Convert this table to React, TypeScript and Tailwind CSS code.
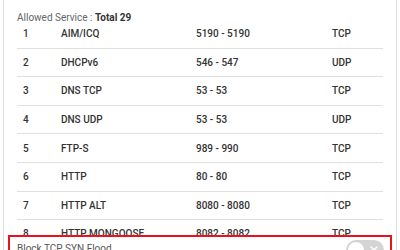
import { X } from "lucide-react";

const services = [
  { id: 1, name: "AIM/ICQ", range: "5190 - 5190", proto: "TCP" },
  { id: 2, name: "DHCPv6", range: "546 - 547", proto: "UDP" },
  { id: 3, name: "DNS TCP", range: "53 - 53", proto: "TCP" },
  { id: 4, name: "DNS UDP", range: "53 - 53", proto: "UDP" },
  { id: 5, name: "FTP-S", range: "989 - 990", proto: "TCP" },
  { id: 6, name: "HTTP", range: "80 - 80", proto: "TCP" },
  { id: 7, name: "HTTP ALT", range: "8080 - 8080", proto: "TCP" },
  { id: 8, name: "HTTP MONGOOSE", range: "8082 - 8082", proto: "TCP" }
];

function Toggle() {
  return (
    <div className="relative h-[20px] w-[38px] shrink-0 rounded-full bg-[#d4d4d4]">
      <span className="absolute left-[1px] top-[1px] h-[18px] w-[18px] rounded-full border border-[#cfcfcf] bg-white" />
      <X className="absolute right-[4px] top-[4px] h-[12px] w-[12px] text-white" strokeWidth={3} />
    </div>
  );
}

export default function App() {
  return (
    <div className="h-[250px] w-[400px] overflow-hidden bg-white font-['Roboto',sans-serif] text-[10px]">
      <div className="mx-[3px] flex h-full flex-col border-x border-[#dedede]">
        <div className="h-[20px] pl-[13px] pt-[12px] leading-[12px] text-[#666]">
          Allowed Service : <span className="font-bold text-[#333]">Total 29</span>
        </div>
        <div className="h-[215px] shrink-0 overflow-hidden px-[13px]">
          {services.map((s) => (
            <div
              key={s.id}
              className="grid h-[28.6px] grid-cols-[44px_135px_136px_1fr] items-center border-b border-[#e0e0e0] font-medium text-[#333]"
            >
              <span className="pl-[6px]">{s.id}</span>
              <span>{s.name}</span>
              <span>{s.range}</span>
              <span>{s.proto}</span>
            </div>
          ))}
        </div>
        <div className="ml-[4px] mr-[4px] flex flex-1 items-start justify-between border-2 border-[#e8121c] pl-[7px] pr-[6px] pt-[3px]">
          <span className="mt-[3px] leading-[12px] text-[#555]">Block TCP SYN Flood</span>
          <Toggle />
        </div>
      </div>
    </div>
  );
}
